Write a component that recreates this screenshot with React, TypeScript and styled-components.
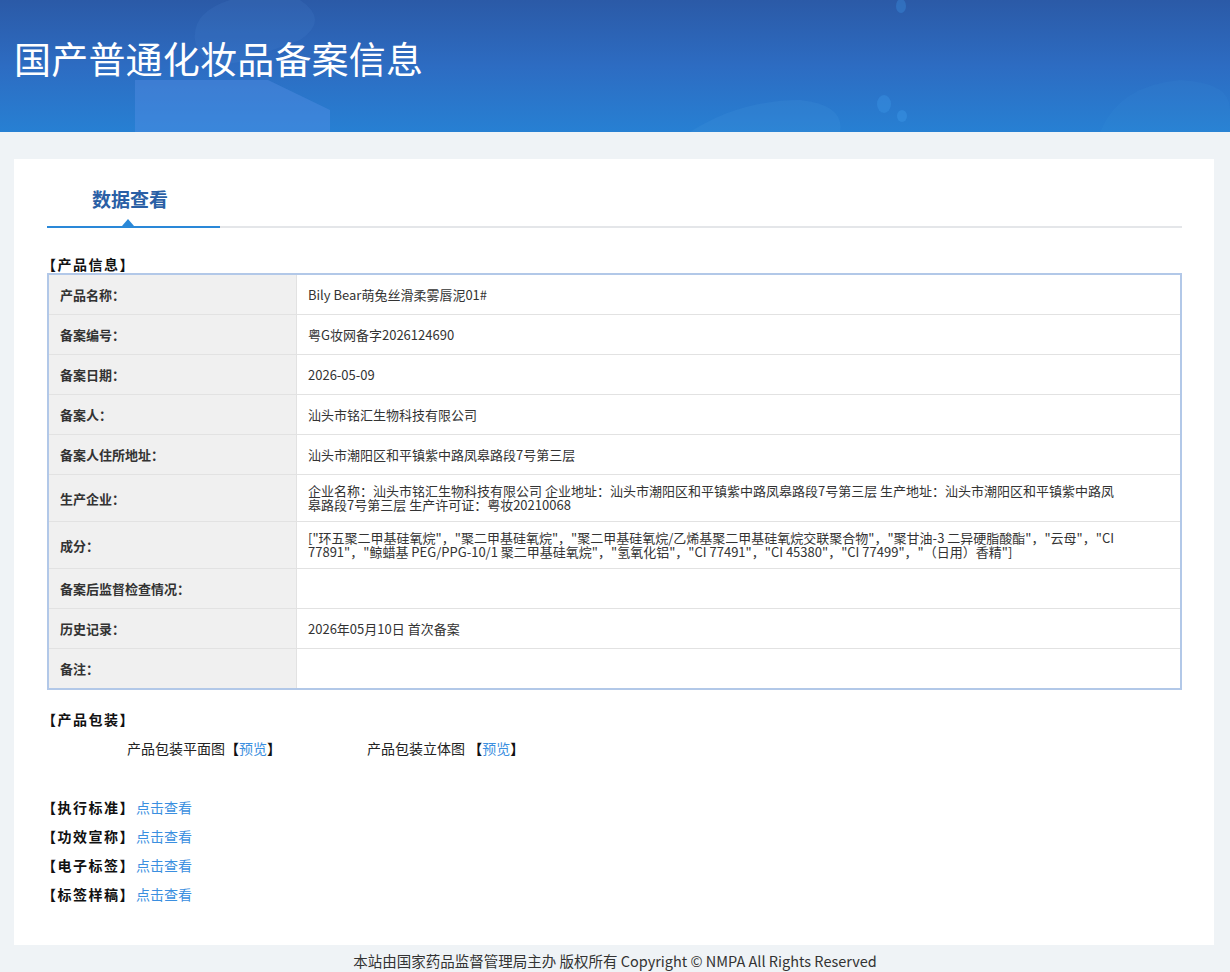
import React from "react";
import styled, { createGlobalStyle } from "styled-components";

const GlobalStyle = createGlobalStyle`
  html, body {
    margin: 0;
    padding: 0;
    background: #eff3f6;
    font-family: "Noto Sans CJK SC", "Microsoft YaHei", "Liberation Sans", sans-serif;
    color: #333;
  }
`;

const Header = styled.header`
  position: relative;
  height: 132px;
  overflow: hidden;
  background: linear-gradient(180deg, #2b5aa7 0%, #2d6cc2 50%, #2780d3 100%);
`;

const HeaderArt = styled.svg`
  position: absolute;
  inset: 0;
  width: 100%;
  height: 100%;
`;

const Title = styled.h1`
  position: relative;
  margin: 0;
  padding: 36px 0 0 14px;
  font-size: 37px;
  line-height: 44px;
  font-weight: 400;
  color: #fff;
  letter-spacing: 0.2px;
`;

const Card = styled.main`
  margin: 27px 16px 0 14px;
  padding: 0 32px 42px 33px;
  background: #fff;
`;

const TabBar = styled.div`
  position: relative;
  border-bottom: 2px solid #e4e6e9;
`;

const Tab = styled.div`
  position: relative;
  width: 173px;
  padding: 27px 0 14px 45px;
  box-sizing: border-box;
  margin-bottom: -2px;
  border-bottom: 2px solid #2a88d8;
  font-size: 19px;
  line-height: 26px;
  font-weight: 700;
  color: #2a5fa5;

  &::after {
    content: "";
    position: absolute;
    left: 75px;
    bottom: 0;
    border-left: 6px solid transparent;
    border-right: 6px solid transparent;
    border-bottom: 7px solid #2a88d8;
  }
`;

const SectionTitle = styled.div<{ $top: number }>`
  margin-top: ${(p) => p.$top}px;
  margin-left: -5px;
  font-size: 14px;
  line-height: 18px;
  font-weight: 700;
  letter-spacing: 1.5px;
  color: #111;
`;

const InfoTable = styled.div`
  border: 2px solid #b2c8e8;
`;

const Row = styled.div<{ $tall?: boolean }>`
  display: grid;
  grid-template-columns: 248px 1fr;
  height: ${(p) => (p.$tall ? 47 : 40)}px;
  box-sizing: border-box;
  border-bottom: 1px solid #e2e2e2;

  &:last-child {
    border-bottom: none;
    height: 39px;
  }
`;

const Label = styled.div`
  display: flex;
  align-items: center;
  padding-left: 11px;
  background: #f0f0f0;
  border-right: 1px solid #e2e2e2;
  font-size: 13px;
  font-weight: 700;
  color: #333;
`;

const Value = styled.div`
  display: flex;
  align-items: center;
  padding: 0 56px 0 11px;
  font-size: 13px;
  line-height: 14px;
  color: #333;
  word-break: break-all;
`;

const PackRow = styled.div`
  display: grid;
  grid-template-columns: 240px 240px;
  padding-left: 80px;
  margin-top: 11px;
  font-size: 14px;
  line-height: 18px;
  color: #222;
`;

const Link = styled.a`
  color: #3b8fe0;
  text-decoration: none;
  cursor: pointer;
`;

const Bracket = styled.span`
  color: #111;
  font-weight: 700;
`;

const LinkList = styled.div`
  margin-top: 41px;
  display: flex;
  flex-direction: column;
  gap: 11px;
`;

const LinkItem = styled.div`
  display: flex;
  align-items: center;
  gap: 1px;
  line-height: 18px;
  margin-left: -5px;
`;

const LinkLabel = styled.span`
  font-size: 14px;
  font-weight: 700;
  letter-spacing: 1.5px;
  color: #111;
`;

const LinkText = styled(Link)`
  font-size: 14px;
`;

const Footer = styled.footer`
  text-align: center;
  padding: 6px 0 4px;
  font-size: 14.5px;
  line-height: 20px;
  color: #333;
`;

const rows: { label: string; value: string; tall?: boolean }[] = [
  { label: "产品名称：", value: "Bily Bear萌兔丝滑柔雾唇泥01#" },
  { label: "备案编号：", value: "粤G妆网备字2026124690" },
  { label: "备案日期：", value: "2026-05-09" },
  { label: "备案人：", value: "汕头市铭汇生物科技有限公司" },
  { label: "备案人住所地址：", value: "汕头市潮阳区和平镇紫中路凤皋路段7号第三层" },
  {
    label: "生产企业：",
    value:
      "企业名称：汕头市铭汇生物科技有限公司 企业地址：汕头市潮阳区和平镇紫中路凤皋路段7号第三层 生产地址：汕头市潮阳区和平镇紫中路凤皋路段7号第三层 生产许可证：粤妆20210068",
    tall: true,
  },
  {
    label: "成分：",
    value:
      '["环五聚二甲基硅氧烷"，"聚二甲基硅氧烷"，"聚二甲基硅氧烷/乙烯基聚二甲基硅氧烷交联聚合物"，"聚甘油-3 二异硬脂酸酯"，"云母"，"CI 77891"，"鲸蜡基 PEG/PPG-10/1 聚二甲基硅氧烷"，"氢氧化铝"，"CI 77491"，"CI 45380"，"CI 77499"，"（日用）香精"]',
    tall: true,
  },
  { label: "备案后监督检查情况：", value: "" },
  { label: "历史记录：", value: "2026年05月10日 首次备案" },
  { label: "备注：", value: "" },
];

const links = ["【执行标准】", "【功效宣称】", "【电子标签】", "【标签样稿】"];

export default function App() {
  return (
    <>
      <GlobalStyle />
      <Header>
        <HeaderArt viewBox="0 0 1230 132" preserveAspectRatio="none">
          <path d="M230 0 L300 0 Q330 20 300 40 L240 62 Q200 70 195 40 Q192 12 230 0 Z" fill="rgba(90,150,225,0.12)" />
          <path d="M135 80 L268 80 L330 110 L330 132 L135 132 Z" fill="rgba(95,150,235,0.35)" />
          <path d="M690 132 Q740 100 800 100 Q845 105 840 132 Z" fill="rgba(80,160,230,0.15)" />
          <ellipse cx="884" cy="104" rx="7" ry="9" fill="rgba(60,150,230,0.4)" />
          <ellipse cx="902" cy="116" rx="5" ry="6" fill="rgba(60,150,230,0.45)" />
          <ellipse cx="901" cy="6" rx="5" ry="7" fill="rgba(60,150,230,0.35)" />
          <path d="M1100 132 Q1120 85 1180 80 Q1230 82 1230 110 L1230 132 Z" fill="rgba(80,160,230,0.08)" />
        </HeaderArt>
        <Title>国产普通化妆品备案信息</Title>
      </Header>

      <Card>
        <TabBar>
          <Tab>数据查看</Tab>
        </TabBar>

        <SectionTitle $top={27}>【产品信息】</SectionTitle>
        <InfoTable>
          {rows.map((r) => (
            <Row key={r.label} $tall={r.tall}>
              <Label>{r.label}</Label>
              <Value>{r.value}</Value>
            </Row>
          ))}
        </InfoTable>

        <SectionTitle $top={20}>【产品包装】</SectionTitle>
        <PackRow>
          <span>
            产品包装平面图<Bracket>【</Bracket>
            <Link>预览</Link>
            <Bracket>】</Bracket>
          </span>
          <span>
            产品包装立体图 <Bracket>【</Bracket>
            <Link>预览</Link>
            <Bracket>】</Bracket>
          </span>
        </PackRow>

        <LinkList>
          {links.map((l) => (
            <LinkItem key={l}>
              <LinkLabel>{l}</LinkLabel>
              <LinkText>点击查看</LinkText>
            </LinkItem>
          ))}
        </LinkList>
      </Card>

      <Footer>本站由国家药品监督管理局主办 版权所有 Copyright © NMPA All Rights Reserved</Footer>
    </>
  );
}
